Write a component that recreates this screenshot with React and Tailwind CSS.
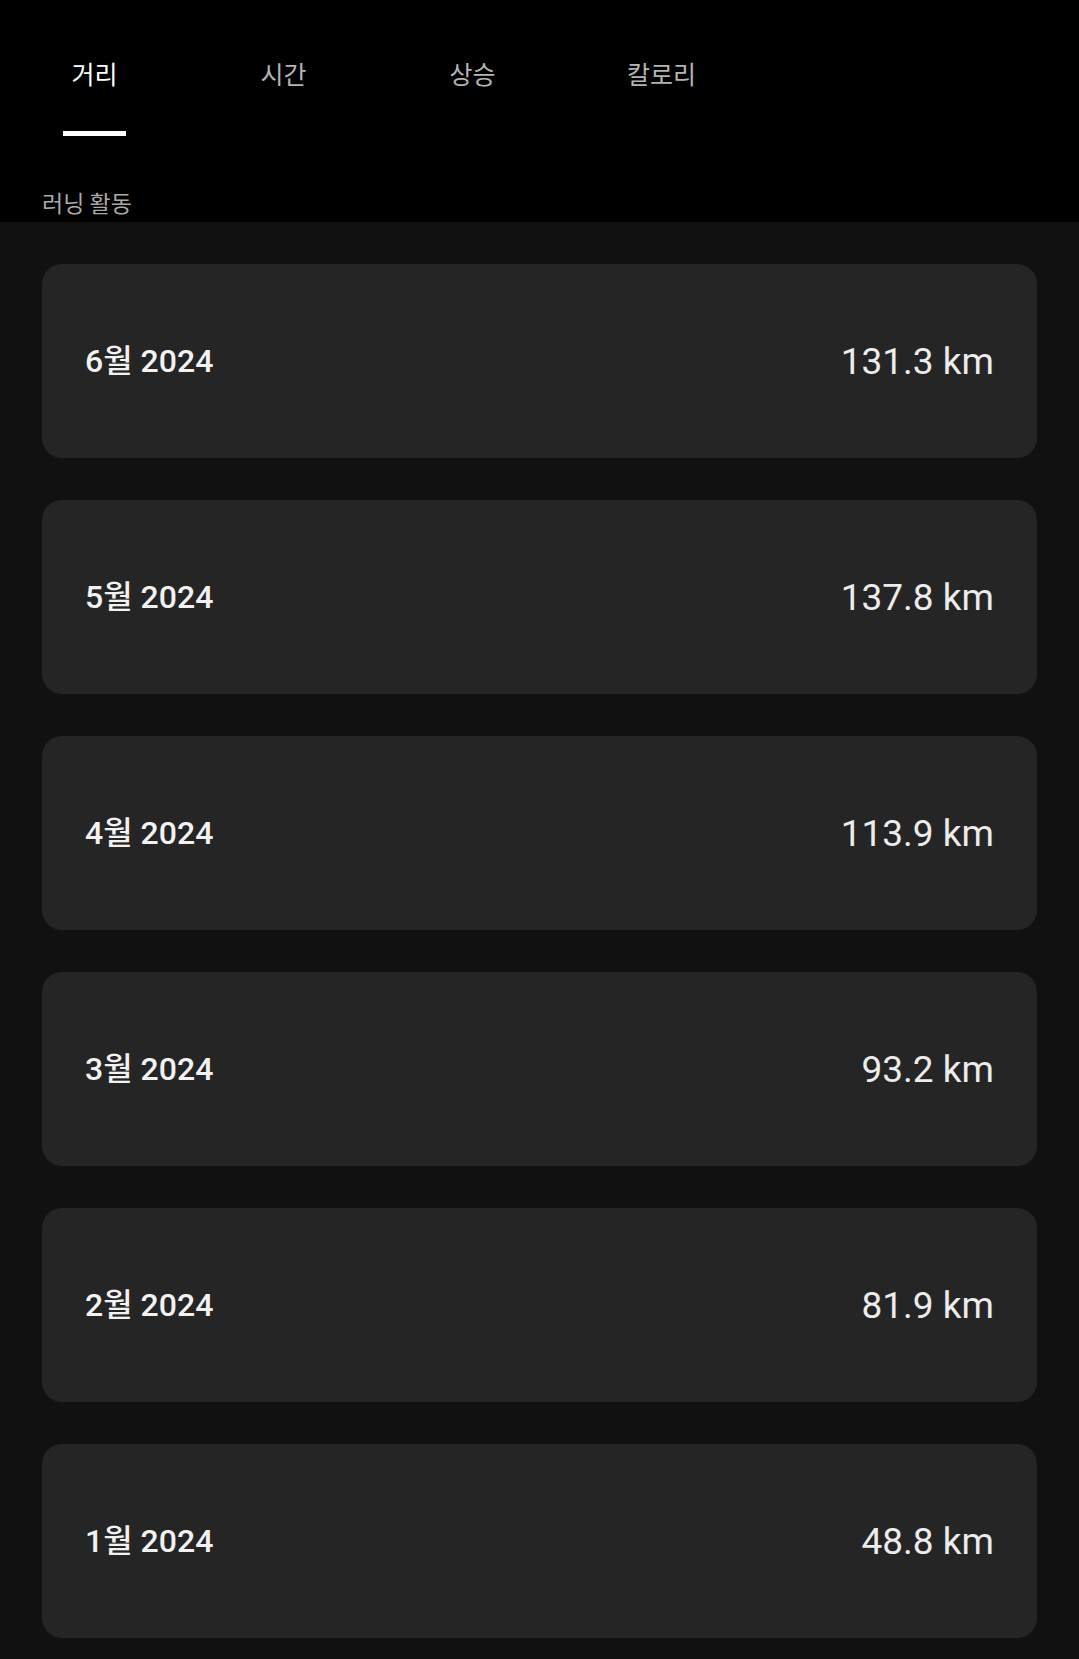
import React from 'react';

const tabs = ['거리', '시간', '상승', '칼로리'];

const months = [
  { label: '6월 2024', value: '131.3 km' },
  { label: '5월 2024', value: '137.8 km' },
  { label: '4월 2024', value: '113.9 km' },
  { label: '3월 2024', value: '93.2 km' },
  { label: '2월 2024', value: '81.9 km' },
  { label: '1월 2024', value: '48.8 km' },
];

const App = () => {
  return (
    <div className="min-h-screen bg-[#111111] font-['Roboto','Noto_Sans_CJK_KR',sans-serif]">
      <header className="bg-black pb-[7px]">
        <nav className="flex">
          {tabs.map((tab, i) => (
            <div key={tab} className="w-[189px] flex flex-col items-center pt-[58px]">
              <span
                className={`text-[25px] leading-[30px] font-['Noto_Sans_CJK_KR',sans-serif] ${
                  i === 0 ? 'text-white' : 'text-[#b4b4b4]'
                }`}
              >
                {tab}
              </span>
              <div className={`mt-[43px] h-[5px] w-[63px] ${i === 0 ? 'bg-white' : 'bg-transparent'}`} />
            </div>
          ))}
        </nav>
        <p className="mt-[53px] pl-[42px] text-[23px] leading-[26px] text-[#a9a9a9] font-['Noto_Sans_CJK_KR',sans-serif]">
          러닝 활동
        </p>
      </header>

      <main className="flex flex-col gap-[42px] px-[42px] pt-[42px] pb-[21px]">
        {months.map((m) => (
          <div
            key={m.label}
            className="h-[194px] rounded-[20px] bg-[#252525] flex items-center justify-between px-[43px]"
          >
            <span className="text-[32px] font-medium text-[#f2f2f2]">{m.label}</span>
            <span className="text-[37px] leading-[44px] pt-[2px] text-[#ececec]">{m.value}</span>
          </div>
        ))}
      </main>
    </div>
  );
};

export default App;
